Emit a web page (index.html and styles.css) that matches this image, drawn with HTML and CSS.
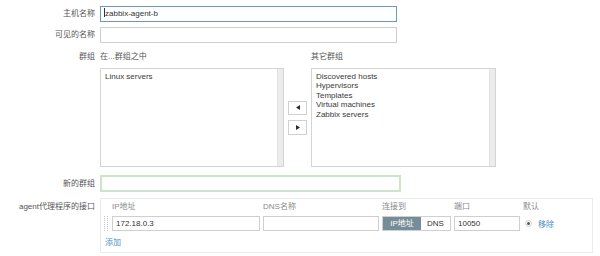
FILE: index.html
```html
<!DOCTYPE html>
<html lang="zh">
<head>
<meta charset="utf-8">
<title>主机</title>
<link rel="stylesheet" href="styles.css">
</head>
<body>
<div class="form">
  <div class="row r-host">
    <div class="lbl">主机名称</div>
    <div class="field"><div class="input focus"><span class="caret"></span>zabbix-agent-b</div></div>
  </div>
  <div class="row r-visible">
    <div class="lbl">可见的名称</div>
    <div class="field"><div class="input"></div></div>
  </div>
  <div class="row r-groups">
    <div class="lbl lbl-groups">群组</div>
    <div class="groups">
      <div class="ghead">在...群组之中</div>
      <div class="gspacer"></div>
      <div class="ghead">其它群组</div>
      <div class="listbox lb-left">
        <div class="items"><div>Linux servers</div></div>
        <div class="track"></div>
      </div>
      <div class="movers">
        <div class="mbtn"><svg width="4" height="5" viewBox="0 0 4 5"><path d="M4 0 L0 2.5 L4 5 Z" fill="#2b2b2b"/></svg></div>
        <div class="mbtn mbtn2"><svg width="4" height="5" viewBox="0 0 4 5"><path d="M0 0 L4 2.5 L0 5 Z" fill="#2b2b2b"/></svg></div>
      </div>
      <div class="listbox lb-right">
        <div class="items">
          <div>Discovered hosts</div>
          <div>Hypervisors</div>
          <div>Templates</div>
          <div>Virtual machines</div>
          <div>Zabbix servers</div>
        </div>
        <div class="track"></div>
      </div>
    </div>
  </div>
  <div class="row r-newgroup">
    <div class="lbl">新的群组</div>
    <div class="field"><div class="input green"></div></div>
  </div>
  <div class="row r-iface">
    <div class="lbl lbl-iface">agent代理程序的接口</div>
    <div class="panel">
      <div class="itable">
        <div></div>
        <div class="th">IP地址</div>
        <div class="th">DNS名称</div>
        <div class="th">连接到</div>
        <div class="th">端口</div>
        <div class="th">默认</div>
        <div class="handle"><svg width="5" height="15" viewBox="0 0 5 15"><g fill="#c4c4c4"><rect x="0" y="0" width="1" height="1"/><rect x="3" y="0" width="1" height="1"/><rect x="0" y="2" width="1" height="1"/><rect x="3" y="2" width="1" height="1"/><rect x="0" y="4" width="1" height="1"/><rect x="3" y="4" width="1" height="1"/><rect x="0" y="6" width="1" height="1"/><rect x="3" y="6" width="1" height="1"/><rect x="0" y="8" width="1" height="1"/><rect x="3" y="8" width="1" height="1"/><rect x="0" y="10" width="1" height="1"/><rect x="3" y="10" width="1" height="1"/><rect x="0" y="12" width="1" height="1"/><rect x="3" y="12" width="1" height="1"/><rect x="0" y="14" width="1" height="1"/><rect x="3" y="14" width="1" height="1"/></g></svg></div>
        <div class="input sm">172.18.0.3</div>
        <div class="input sm"></div>
        <div class="seg"><span class="seg-on">IP地址</span><span class="seg-off">DNS</span></div>
        <div class="input sm">10050</div>
        <div class="dflt"><span class="radio"><span class="dot"></span></span><a class="link">移除</a></div>
      </div>
      <div class="add"><a class="link">添加</a></div>
    </div>
  </div>
</div>
</body>
</html>
```

FILE: styles.css
```css
* { box-sizing: border-box; }
html, body { margin: 0; padding: 0; background: #fff; }
body {
  font-family: "Liberation Sans", Arial, "Noto Sans CJK SC", sans-serif;
  font-size: 8px;
  color: #333;
}
.form { padding-top: 6px; }
.row {
  display: grid;
  grid-template-columns: 95px 1fr;
  column-gap: 5px;
}
.lbl {
  text-align: right;
  color: #555;
  line-height: 16px;
  white-space: nowrap;
}
.r-visible { margin-top: 5px; }
.r-groups { margin-top: 8px; }
.r-newgroup { margin-top: 8px; }
.r-iface { margin-top: 6px; }
.lbl-groups { line-height: 12px; }
.lbl-iface { line-height: 12px; padding-top: 3px; }
.r-newgroup .lbl { line-height: 17px; }

.input {
  height: 16px;
  border: 1px solid #cfcfcf;
  background: #fff;
  line-height: 14px;
  padding: 0 3px;
  color: #333;
  white-space: nowrap;
  overflow: hidden;
}
.r-host .input, .r-visible .input { width: 297px; }
.input.focus { border-color: #6b9bb0; }
.caret {
  display: inline-block;
  width: 1px;
  height: 9px;
  background: #333;
  vertical-align: -1px;
  margin-right: 0;
}
.input.green {
  width: 301px;
  height: 17px;
  border: 2px solid #cde4cc;
}

.groups {
  display: grid;
  grid-template-columns: 184px 27px 185px;
  grid-template-rows: 12px 99px;
  row-gap: 5px;
}
.ghead { line-height: 12px; color: #555; }
.listbox {
  display: flex;
  border: 1px solid #d4d4d4;
  background: #fff;
}
.items {
  flex: 1;
  padding: 3px 4px;
  line-height: 9.4px;
  color: #3a3a3a;
}
.track {
  width: 6px;
  background: #ececec;
  border-left: 1px solid #e2e2e2;
}
.movers {
  display: flex;
  flex-direction: column;
  justify-content: center;
  padding: 0 4px;
}
.mbtn {
  height: 14px;
  border: 1px solid #d0d0d0;
  background: #fff;
  display: flex;
  align-items: center;
  justify-content: center;
}
.mbtn2 { margin-top: 5px; height: 15px; }

.panel {
  width: 493px;
  border: 1px solid #e9ecee;
  padding: 2px 0 3px 3px;
}
.itable {
  display: grid;
  grid-template-columns: 5px 148px 116px 69px 66px auto;
  grid-template-rows: 12px 15px;
  column-gap: 3px;
  row-gap: 3px;
  align-items: center;
}
.th { line-height: 12px; color: #8a8a8a; white-space: nowrap; }
.input.sm { height: 15px; line-height: 13px; }
.handle { display: flex; align-items: center; height: 15px; }
.seg {
  display: flex;
  height: 15px;
  border: 1px solid #d0d0d0;
}
.seg-on {
  width: 38px;
  background: #768c98;
  color: #fff;
  text-align: center;
  line-height: 13px;
}
.seg-off {
  flex: 1;
  color: #333;
  text-align: center;
  line-height: 13px;
}
.dflt {
  display: flex;
  align-items: center;
  padding-left: 2px;
}
.radio {
  width: 7px;
  height: 7px;
  border: 1px solid #cfcfcf;
  border-radius: 50%;
  display: flex;
  align-items: center;
  justify-content: center;
  margin-right: 6px;
}
.dot {
  width: 3px;
  height: 3px;
  border-radius: 50%;
  background: #555;
}
.link { color: #4b8fc0; text-decoration: none; }
.add { margin-top: 6px; line-height: 12px; margin-left: 1px; }
```
